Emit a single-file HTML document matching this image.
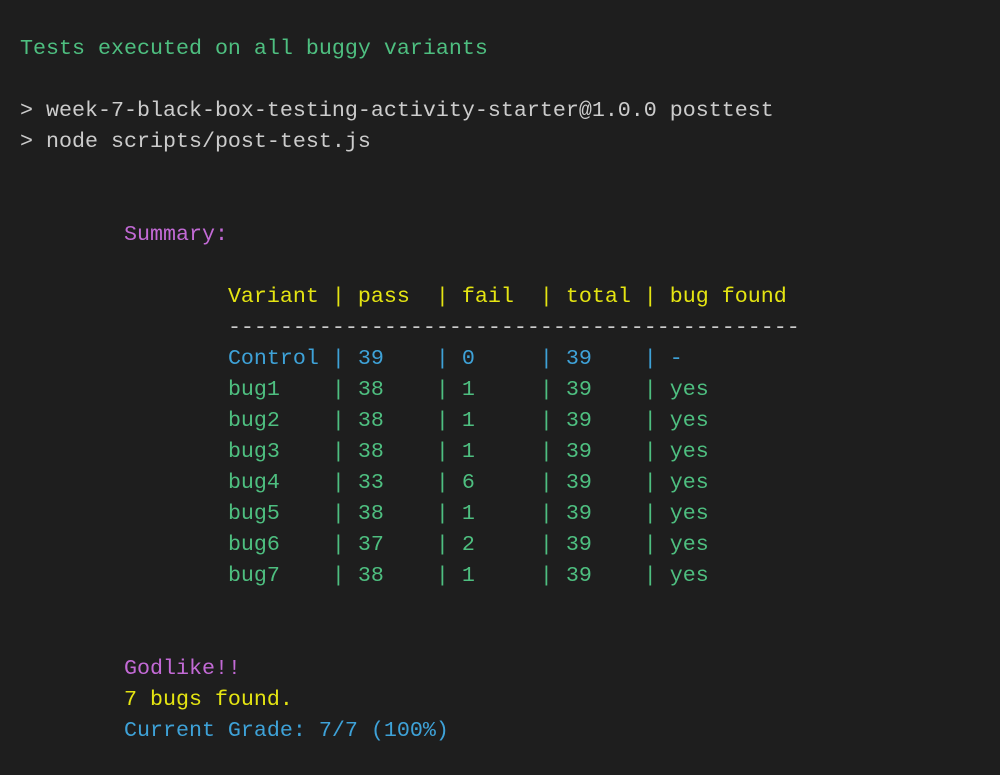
<!DOCTYPE html>
<html><head><meta charset="utf-8"><style>
html,body{margin:0;padding:0;background:#1e1e1e;width:1000px;height:775px;overflow:hidden}
pre{margin:0;position:absolute;left:20px;top:33px;font-family:"Liberation Mono",monospace;font-size:21.67px;line-height:31px;color:#cccccc}
.g{color:#4ebf80}.y{color:#e5e512}.b{color:#3ea2d8}.m{color:#c36ad6}.w{color:#cccccc}
</style></head><body><pre><span class="g">Tests executed on all buggy variants</span>

<span class="w">&gt; week-7-black-box-testing-activity-starter@1.0.0 posttest</span>
<span class="w">&gt; node scripts/post-test.js</span>


        <span class="m">Summary:</span>

                <span class="y">Variant | pass  | fail  | total | bug found</span>
                <span class="w">--------------------------------------------</span>
                <span class="b">Control | 39    | 0     | 39    | -</span>
                <span class="g">bug1    | 38    | 1     | 39    | yes</span>
                <span class="g">bug2    | 38    | 1     | 39    | yes</span>
                <span class="g">bug3    | 38    | 1     | 39    | yes</span>
                <span class="g">bug4    | 33    | 6     | 39    | yes</span>
                <span class="g">bug5    | 38    | 1     | 39    | yes</span>
                <span class="g">bug6    | 37    | 2     | 39    | yes</span>
                <span class="g">bug7    | 38    | 1     | 39    | yes</span>


        <span class="m">Godlike!!</span>
        <span class="y">7 bugs found.</span>
        <span class="b">Current Grade: 7/7 (100%)</span>
</pre></body></html>
